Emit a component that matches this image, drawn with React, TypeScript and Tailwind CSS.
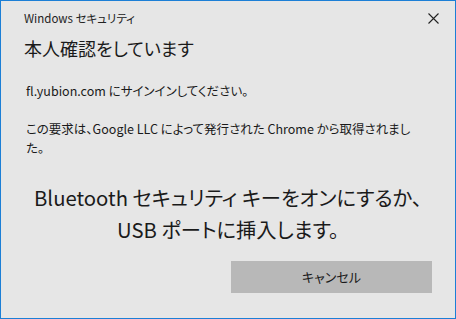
import React from "react";

const font = {
  fontFamily: '"Noto Sans CJK JP", sans-serif',
  fontFeatureSettings: '"palt"',
};

export default function App() {
  return (
    <div
      className="w-[456px] h-[319px] border border-[#1c7fd6] bg-[#e6e6e6] text-[#1a1a1a] flex flex-col box-border"
      style={font}
    >
      <div className="flex items-center justify-between h-[24px] mt-[5px] pl-[23px] pr-[16px]">
        <span className="text-[11.5px] leading-[16px] text-[#222]">Windows セキュリティ</span>
        <svg width="11" height="11" viewBox="0 0 11 11" className="mt-[1px]">
          <path d="M0.5 0.5 L10.5 10.5 M10.5 0.5 L0.5 10.5" stroke="#222" strokeWidth="1.1" />
        </svg>
      </div>
      <div className="pl-[23px] mt-[5px] text-[18px] leading-[26px]">本人確認をしています</div>
      <div className="pl-[25px] mt-[20px] text-[12.5px] leading-[19px]">fl.yubion.com にサインインしてください。</div>
      <div className="pl-[25px] pr-[28px] mt-[19px] text-[12.5px] leading-[19px]">
        この要求は、Google LLC によって発行された Chrome から取得されました。
      </div>
      <div className="mt-[24px] text-center text-[20.3px] leading-[32px]">
        Bluetooth セキュリティ キーをオンにするか、
        <br />
        USB ポートに挿入します。
      </div>
      <div className="flex justify-end pr-[23px] mt-[16px]">
        <button className="w-[201px] h-[32px] bg-[#b8b8b8] text-[13px] text-[#1a1a1a]">キャンセル</button>
      </div>
    </div>
  );
}
